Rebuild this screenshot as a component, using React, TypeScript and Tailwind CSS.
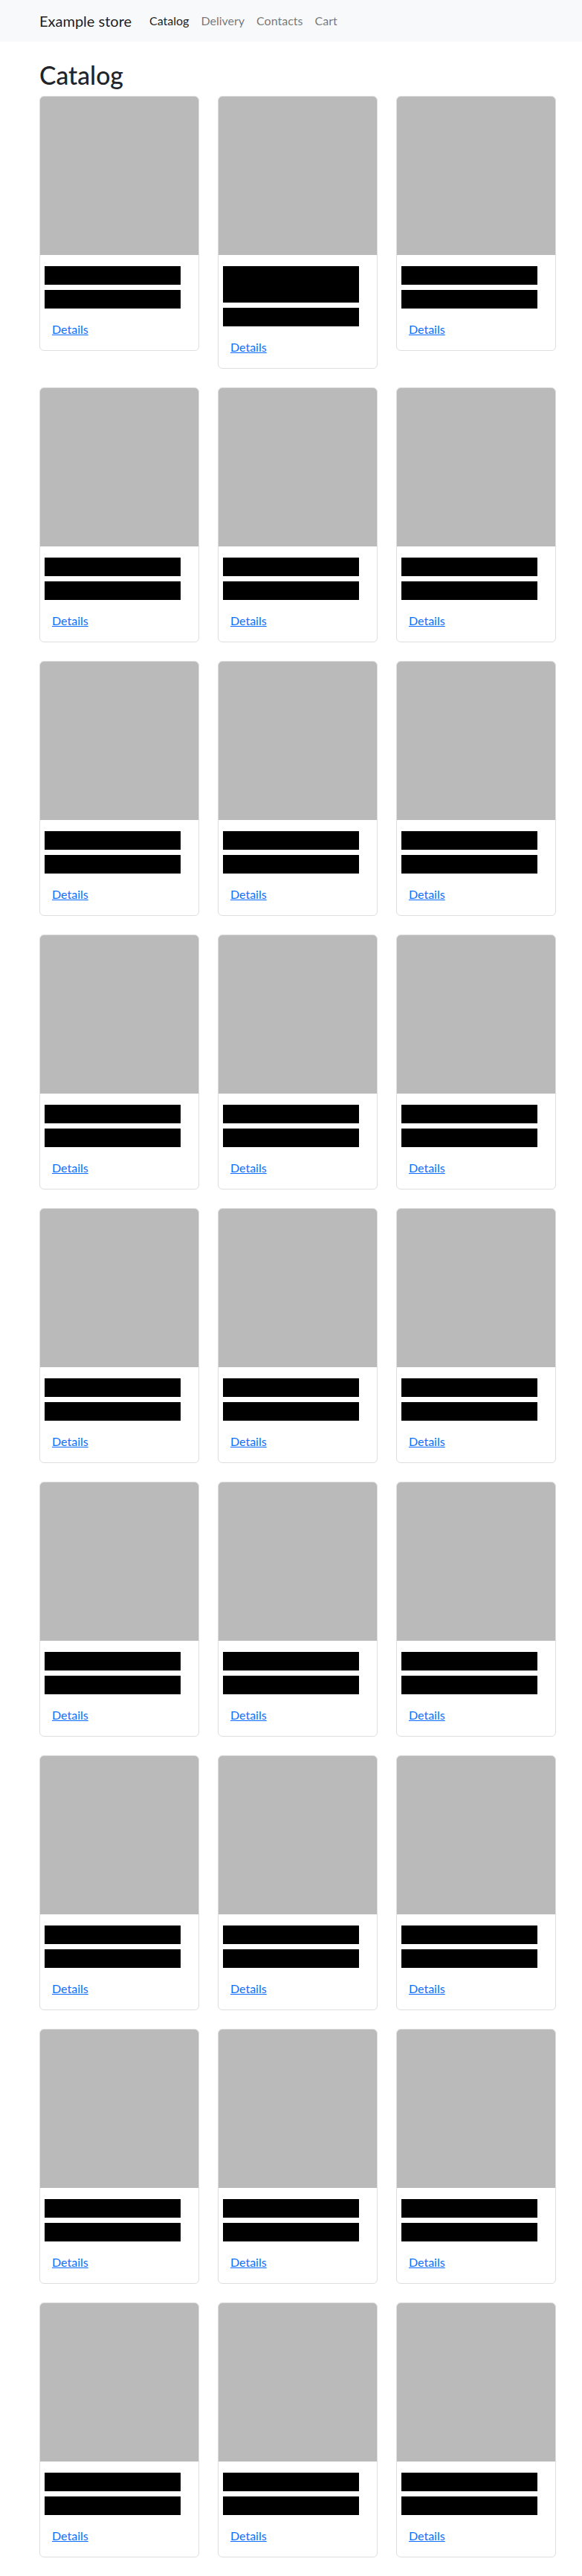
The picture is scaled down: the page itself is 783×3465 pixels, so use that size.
import React from "react";

const font = { fontFamily: '"Segoe UI", Lato, "Liberation Sans", sans-serif' };

function Card({ tall }: { tall?: boolean }) {
  return (
    <div className="rounded-[6px] border border-[#dedede] bg-white overflow-hidden">
      <div className="h-[213px] bg-[#bababa]" />
      <div className="pt-[15px] pb-4">
        <div className={`${tall ? "h-[49px]" : "h-[25px]"} w-[183px] ml-[6px] bg-black`} />
        <div className="h-[25px] w-[183px] ml-[6px] mt-[7px] bg-black" />
        <div className="mt-4 pl-4 leading-6 text-base">
          <a href="#" className="text-[#0d6efd] underline">
            Details
          </a>
        </div>
      </div>
    </div>
  );
}

export default function App() {
  const items = Array.from({ length: 27 }, (_, i) => i);
  return (
    <div className="min-h-[3465px] bg-white text-[#212529]" style={font}>
      <nav className="h-[56px] bg-[#f8f9fa] flex items-center pl-[53px]">
        <span className="text-[20px] text-[rgba(0,0,0,0.9)] mr-4 leading-[30px]">Example store</span>
        <div className="flex text-base leading-6">
          <a href="#" className="px-2 text-[rgba(0,0,0,0.9)]">Catalog</a>
          <a href="#" className="px-2 text-[rgba(0,0,0,0.55)]">Delivery</a>
          <a href="#" className="px-2 text-[rgba(0,0,0,0.55)]">Contacts</a>
          <a href="#" className="px-2 text-[rgba(0,0,0,0.55)]">Cart</a>
        </div>
      </nav>
      <main className="pl-[53px] pt-[25px] pb-[25px]">
        <h1 className="text-[33.7px] font-medium leading-[1.2] mb-2">Catalog</h1>
        <div className="grid grid-cols-[repeat(3,214.7px)] gap-x-[25.3px] gap-y-[25px] items-start">
          {items.map((i) => (
            <Card key={i} tall={i === 1} />
          ))}
        </div>
      </main>
    </div>
  );
}
